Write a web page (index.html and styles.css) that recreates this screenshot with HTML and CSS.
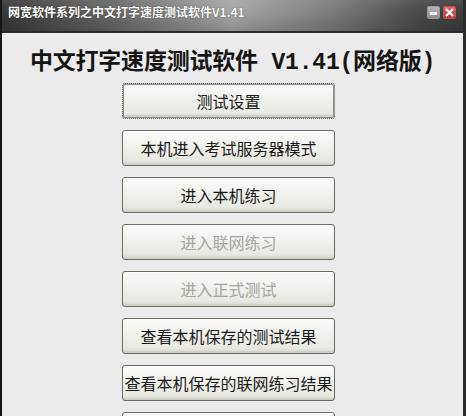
FILE: index.html
```html
<!DOCTYPE html>
<html lang="zh-CN">
  <head>
    <meta charset="UTF-8" />
    <title>中文打字速度测试软件 V1.41</title>
    <link rel="stylesheet" href="styles.css">
  </head>
  <body>
    <div class="window">
      <div class="titlebar">
        <span class="title">网宽软件系列之中文打字速度测试软件V1.41</span>
        <div class="controls">
          <span class="ctl min"><i></i></span>
          <span class="ctl close">
            <svg width="9" height="9" viewBox="0 0 9 9"><path d="M1 1L8 8M8 1L1 8" stroke="#fff" stroke-width="2"/></svg>
          </span>
        </div>
      </div>

      <div class="content">
        <h1>中文打字速度测试软件 V1.41(网络版)</h1>
        <div class="menu">
          <button class="btn focus">测试设置</button>
          <button class="btn">本机进入考试服务器模式</button>
          <button class="btn">进入本机练习</button>
          <button class="btn" disabled>进入联网练习</button>
          <button class="btn" disabled>进入正式测试</button>
          <button class="btn">查看本机保存的测试结果</button>
          <button class="btn">查看本机保存的联网练习结果</button>
          <button class="btn"></button>
        </div>
      </div>
    </div>
  </body>
</html>
```

FILE: styles.css
```css
body {
  margin: 0;
  font-family: "Noto Sans CJK SC", "Liberation Sans", sans-serif;
}
.window {
  width: 466px;
  height: 416px;
  box-sizing: border-box;
  border-left: 2px solid #161616;
  border-right: 3px solid #2a2a2a;
  background: #ebebeb;
  overflow: hidden;
}
.titlebar {
  height: 33px;
  box-sizing: border-box;
  display: flex;
  align-items: flex-start;
  justify-content: space-between;
  padding: 4px 7px 0 6px;
  background:
    linear-gradient(to bottom, rgba(255,255,255,0.08), rgba(0,0,0,0) 40%, rgba(0,0,0,0.15)),
    linear-gradient(to right, #383838 0%, #6a6a6a 25%, #a6a6a6 50%, #7a7a7a 72%, #4a4a4a 90%, #3c3c3c 100%);
  border-bottom: 2px solid #2a2a2a;
}
.title {
  color: #fff;
  font-size: 12px;
  font-weight: bold;
  line-height: 16px;
  text-shadow: 0 0 1px #222;
}
.controls {
  display: flex;
  gap: 3px;
  margin-top: 2px;
}
.ctl {
  width: 13px;
  height: 13px;
  box-sizing: border-box;
  border-radius: 2px;
  display: flex;
  align-items: center;
  justify-content: center;
}
.min {
  background: linear-gradient(#b8b8b8, #8c8c8c);
  border: 1px solid #9a9a9a;
}
.min i {
  display: block;
  width: 7px;
  height: 3px;
  margin-top: 2px;
  background: #f2f2f2;
}
.close {
  background: linear-gradient(#d96a6a, #b53a3a);
  border: 1px solid #c85050;
}
.content {
  padding-top: 12px;
}
h1 {
  margin: 2px 0 4px;
  text-align: center;
  font-family: "Liberation Mono", "Noto Sans CJK SC", monospace;
  font-size: 23px;
  font-weight: 600;
  line-height: 32px;
  color: #151515;
  letter-spacing: -0.2px;
}
.menu {
  display: flex;
  flex-direction: column;
  align-items: center;
  gap: 11px;
  margin-left: -8px;
}
.btn {
  width: 213px;
  height: 36px;
  flex-shrink: 0;
  padding: 0;
  border: 1px solid #6a6a66;
  border-radius: 3px;
  background: linear-gradient(to bottom, #fbfbf9 0%, #f1f1ed 45%, #e9e9e3 85%, #d6d5cd 100%);
  box-shadow: inset 0 -2px 0 #d2d1c8, inset 0 1px 0 #fff;
  font-family: "Noto Sans CJK SC", sans-serif;
  font-size: 16px;
  line-height: 20px;
  color: #1a1a1a;
}
.btn.focus {
  border: 1px dotted #444;
  box-shadow: inset 0 0 0 1px #8a8a86, inset 0 -3px 0 #d2d1c8;
}
.btn:disabled {
  color: #a6a6a2;
}
```
